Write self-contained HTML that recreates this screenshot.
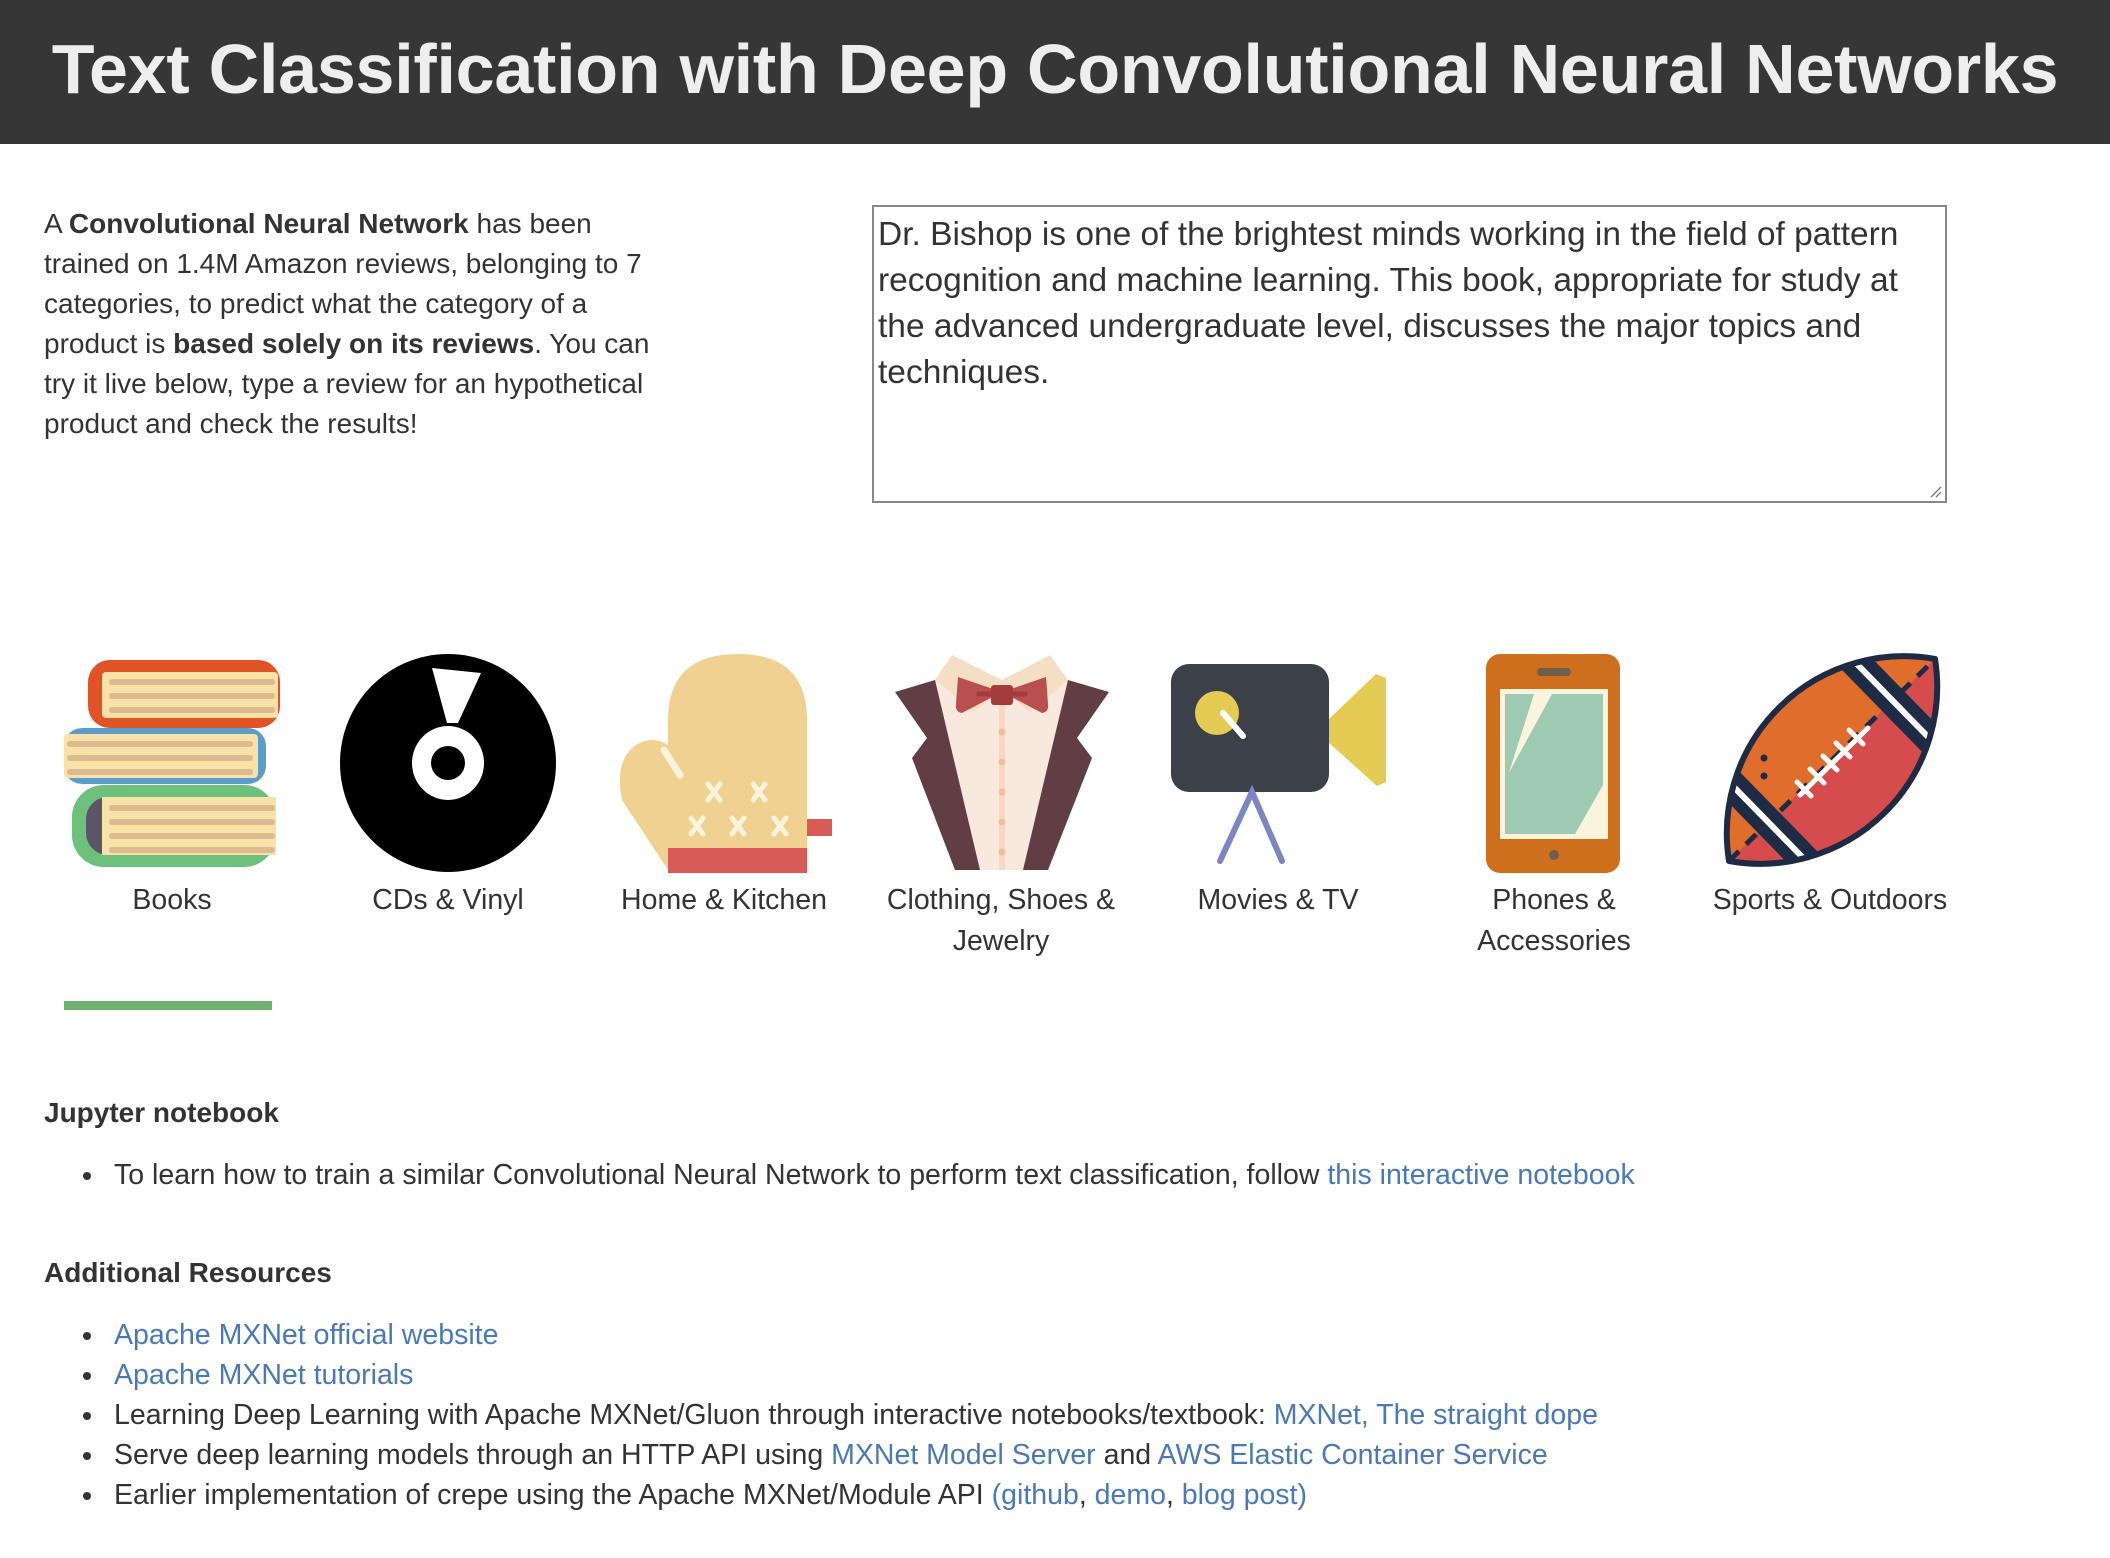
<!DOCTYPE html>
<html><head><meta charset="utf-8"><style>
html,body{margin:0;padding:0;background:#fff;width:2110px;height:1558px;overflow:hidden;font-family:"Liberation Sans",Arial,sans-serif;color:#333}
.hdr{position:absolute;left:0;top:0;width:2110px;height:144px;background:#363636}
.hdr h1{margin:0;position:absolute;left:0;width:2110px;text-align:center;top:24px;font-size:70px;line-height:90px;color:#eee;font-weight:bold;letter-spacing:-0.25px}
.intro{position:absolute;left:44px;top:204px;width:700px;font-size:28px;line-height:40px;white-space:nowrap}
.ta{position:absolute;left:872px;top:205px;width:1075px;height:298px;border:2px solid #888;box-sizing:border-box;padding:5px 4px;font-size:33.5px;line-height:46px;color:#333;white-space:nowrap}
.lab{position:absolute;width:276px;text-align:center;font-size:28.5px;line-height:41px;top:880px}
.bar{position:absolute;left:64px;top:1001px;width:208px;height:9px;background:#6fb270}
h3{position:absolute;margin:0;left:44px;font-size:28px;font-weight:bold}
ul{position:absolute;margin:0;padding:0;left:114px;list-style:none;font-size:28.5px;line-height:40px;white-space:nowrap}
li{position:relative}
li:before{content:"";position:absolute;left:-31px;top:17px;width:8px;height:8px;border-radius:50%;background:#333}
a{color:#4a78b8;text-decoration:none}
</style></head><body>
<div class="hdr"><h1>Text Classification with Deep Convolutional Neural Networks</h1></div>
<div class="intro">A <b>Convolutional Neural Network</b> has been<br>trained on 1.4M Amazon reviews, belonging to 7<br>categories, to predict what the category of a<br>product is <b>based solely on its reviews</b>. You can<br>try it live below, type a review for an hypothetical<br>product and check the results!</div>
<div class="ta">Dr. Bishop is one of the brightest minds working in the field of pattern<br>recognition and machine learning. This book, appropriate for study at<br>the advanced undergraduate level, discusses the major topics and<br>techniques.
<svg style="position:absolute;right:2px;bottom:2px" width="16" height="16"><path d="M14 4L4 14M14 9L9 14" stroke="#777" stroke-width="1.3"/></svg></div>

<svg style="position:absolute;left:0;top:640px" width="2110" height="240" viewBox="0 640 2110 240">
<!-- Books -->
<rect x="88" y="660" width="192" height="68" rx="22" fill="#e05327"/>
<rect x="102" y="672" width="176" height="46" rx="4" fill="#f8e2a8"/>
<g stroke="#dcbb90" stroke-width="6" stroke-linecap="round"><line x1="112" y1="682" x2="272" y2="682"/><line x1="112" y1="696" x2="272" y2="696"/><line x1="112" y1="710" x2="272" y2="710"/></g>
<rect x="64" y="728" width="202" height="56" rx="18" fill="#5b9ccb"/>
<rect x="64" y="734" width="194" height="44" rx="4" fill="#f8e2a8"/>
<g stroke="#dcbb90" stroke-width="6" stroke-linecap="round"><line x1="70" y1="744" x2="250" y2="744"/><line x1="70" y1="758" x2="250" y2="758"/><line x1="70" y1="772" x2="250" y2="772"/></g>
<rect x="72" y="785" width="204" height="82" rx="32" fill="#6dc17d"/>
<rect x="86" y="797" width="190" height="58" rx="22" fill="#5b5568"/>
<rect x="102" y="797" width="174" height="58" fill="#f8e2a8"/>
<g stroke="#dcbb90" stroke-width="6" stroke-linecap="round"><line x1="112" y1="808" x2="272" y2="808"/><line x1="112" y1="822" x2="272" y2="822"/><line x1="112" y1="836" x2="272" y2="836"/><line x1="112" y1="850" x2="272" y2="850"/></g>
<!-- CD -->
<ellipse cx="448" cy="763" rx="108" ry="109" fill="#000"/>
<polygon points="432,668 481,673 458,723 447,723" fill="#fff"/>
<ellipse cx="448" cy="763" rx="36" ry="37" fill="#fff"/>
<ellipse cx="448" cy="763" rx="17" ry="17" fill="#000"/>
<!-- Mitten -->
<path d="M668 870V720Q668 654 738 654Q807 654 807 720V870Z" fill="#f0d191"/>
<path d="M684 760Q660 730 636 745Q614 760 622 800L668 870L684 870Z" fill="#f0d191"/>
<line x1="664" y1="750" x2="680" y2="775" stroke="#faf3dc" stroke-width="7" stroke-linecap="round"/>
<rect x="668" y="848" width="139" height="25" fill="#d95b57"/>
<rect x="807" y="819" width="25" height="17" fill="#d95b57"/>
<g stroke="#faf3dc" stroke-width="5" stroke-linecap="round">
<path d="M708 784l12 16M720 784l-12 16M753 784l12 16M765 784l-12 16M691 818l12 16M703 818l-12 16M732 818l12 16M744 818l-12 16M774 818l12 16M786 818l-12 16"/></g>
<!-- Clothing -->
<polygon points="935,680 1068,680 1023,870 980,870" fill="#f8e8de"/>
<line x1="1002" y1="700" x2="1002" y2="870" stroke="#f5d9c0" stroke-width="6"/>
<g fill="#efbfa0"><circle cx="1002" cy="732" r="3.5"/><circle cx="1002" cy="762" r="3.5"/><circle cx="1002" cy="792" r="3.5"/><circle cx="1002" cy="822" r="3.5"/><circle cx="1002" cy="852" r="3.5"/></g>
<polygon points="952,655 1002,680 1050,655 1068,680 1030,712 1002,690 974,712 935,680" fill="#f5dfc4"/>
<polygon points="895,692 935,680 980,870 955,870 912,758 927,738" fill="#613d44"/>
<polygon points="1109,692 1068,680 1023,870 1048,870 1092,758 1077,738" fill="#613d44"/>
<path d="M958 677L1002 692L962 713Q955 712 956 704Z" fill="#b94f4e"/>
<path d="M1046 677L1002 692L1042 713Q1049 712 1048 704Z" fill="#b94f4e"/>
<line x1="979" y1="694" x2="1025" y2="694" stroke="#a43c3e" stroke-width="5" stroke-linecap="round"/>
<rect x="991" y="685" width="22" height="20" rx="3" fill="#a43c3e"/>
<!-- Movies -->
<rect x="1171" y="664" width="158" height="128" rx="18" fill="#3c4049"/>
<polygon points="1329,719 1376,674 1386,678 1386,782 1377,786 1329,743" fill="#e4cc54"/>
<circle cx="1217" cy="713" r="22" fill="#e4cc54"/>
<line x1="1223" y1="713" x2="1243" y2="736" stroke="#fff" stroke-width="6" stroke-linecap="round"/>
<path d="M1220 861L1252 792L1282 861" stroke="#7b86c2" stroke-width="6" fill="none" stroke-linecap="round"/>
<!-- Phone -->
<rect x="1486" y="654" width="134" height="219" rx="14" fill="#cd6f1c"/>
<rect x="1500" y="689" width="108" height="150" fill="#faf3de"/>
<polygon points="1505,694 1534,694 1505,785" fill="#9ecab2"/>
<polygon points="1552,694 1603,694 1603,785 1575,834 1505,834 1505,830 1505,780" fill="#9ecab2"/>
<rect x="1537" y="668" width="34" height="8" rx="4" fill="#6e5e4e"/>
<circle cx="1554" cy="855" r="5" fill="#6e5e4e"/>
<!-- Football -->
<defs><clipPath id="fb"><path d="M1729 861A177 177 0 0 1 1935 659A177 177 0 0 1 1729 861Z"/></clipPath></defs>
<g clip-path="url(#fb)">
<rect x="1680" y="640" width="300" height="240" fill="#d64c4c"/>
<polygon points="1729,861 1935,659 1960,600 1650,600 1650,861" fill="#e06d2c"/>
<line x1="1729" y1="861" x2="1935" y2="659" stroke="#1e2b45" stroke-width="5" stroke-dasharray="14 10"/>
<path d="M1722 786L1806 872M1734 776L1818 862" stroke="#1e2b45" stroke-width="14"/>
<path d="M1728 781L1812 867" stroke="#fff" stroke-width="6"/>
<path d="M1846 664L1930 750M1858 654L1942 740" stroke="#1e2b45" stroke-width="14"/>
<path d="M1852 659L1936 745" stroke="#fff" stroke-width="6"/>
</g>
<path d="M1729 861A177 177 0 0 1 1935 659A177 177 0 0 1 1729 861Z" fill="none" stroke="#1e2b45" stroke-width="6" stroke-linejoin="round"/>
<line x1="1800" y1="795" x2="1868" y2="728" stroke="#fff" stroke-width="5" stroke-linecap="round"/>
<g stroke="#fff" stroke-width="5" stroke-linecap="round"><path d="M1797 782l14 14M1810 769l14 14M1823 756l14 14M1836 743l14 14M1849 730l14 14"/></g>
<circle cx="1764" cy="758" r="3.5" fill="#1e2b45"/><circle cx="1764" cy="776" r="3.5" fill="#1e2b45"/>
</svg>

<div class="lab" style="left:34px">Books</div>
<div class="lab" style="left:310px">CDs &amp; Vinyl</div>
<div class="lab" style="left:586px">Home &amp; Kitchen</div>
<div class="lab" style="left:863px">Clothing, Shoes &amp;<br>Jewelry</div>
<div class="lab" style="left:1140px">Movies &amp; TV</div>
<div class="lab" style="left:1416px">Phones &amp;<br>Accessories</div>
<div class="lab" style="left:1692px">Sports &amp; Outdoors</div>
<div class="bar"></div>

<h3 style="top:1097px">Jupyter notebook</h3>
<ul style="top:1155px"><li>To learn how to train a similar Convolutional Neural Network to perform text classification, follow <a>this interactive notebook</a></li></ul>
<h3 style="top:1257px">Additional Resources</h3>
<ul style="top:1315px">
<li><a>Apache MXNet official website</a></li>
<li><a>Apache MXNet tutorials</a></li>
<li>Learning Deep Learning with Apache MXNet/Gluon through interactive notebooks/textbook: <a>MXNet, The straight dope</a></li>
<li>Serve deep learning models through an HTTP API using <a>MXNet Model Server</a> and <a>AWS Elastic Container Service</a></li>
<li>Earlier implementation of crepe using the Apache MXNet/Module API <a>(github</a>, <a>demo</a>, <a>blog post)</a></li>
</ul>
</body></html>
